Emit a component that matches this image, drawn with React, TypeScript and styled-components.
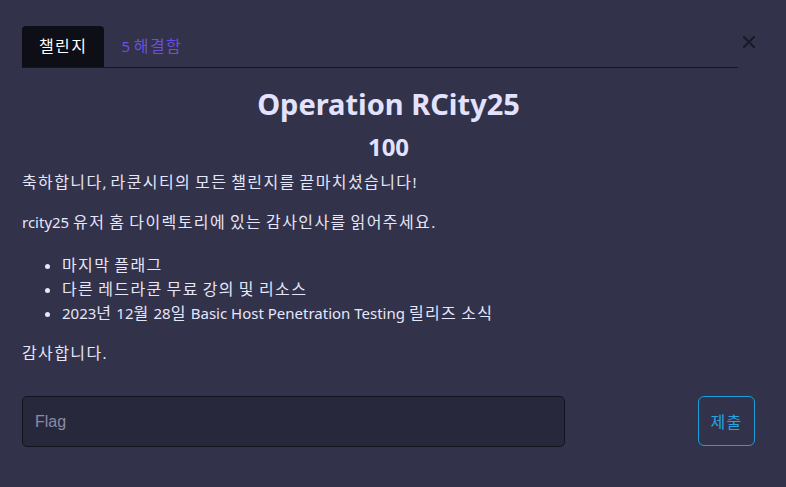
import { Fragment } from "react";
import styled, { createGlobalStyle } from "styled-components";

const GlobalStyle = createGlobalStyle`
  html, body {
    margin: 0;
    padding: 0;
    background: #32324a;
  }
  body {
    font-family: "Noto Sans", "Noto Sans CJK KR", sans-serif;
    color: #e6e6fa;
  }
  * {
    box-sizing: border-box;
  }
`;

// hangul runs are set a touch wider, like the wide korean face of the original
const Hangul = styled.span`
  font-family: "Noto Sans CJK KR", sans-serif;
  font-size: 16px;
  line-height: 1;
  letter-spacing: 1.4px;
`;

function Ko({ text }: { text: string }) {
  const parts = text.split(/([가-힣]+)/);
  return (
    <>
      {parts.map((part, i) =>
        /[가-힣]/.test(part) ? (
          <Hangul key={i}>{part}</Hangul>
        ) : (
          <Fragment key={i}>{part}</Fragment>
        )
      )}
    </>
  );
}

const Modal = styled.div`
  width: 786px;
  height: 487px;
  padding: 26px 31px 0 22px;
  background: #32324a;
`;

const Header = styled.div`
  display: flex;
  align-items: flex-start;
`;

const TabList = styled.div`
  flex: 1;
  display: flex;
  border-bottom: 1px solid #15151f;
`;

const Tab = styled.div<{ $active?: boolean }>`
  height: 41px;
  padding: 0 17px;
  line-height: 41px;
  font-size: 15px;
  white-space: pre;
  border-radius: 4px 4px 0 0;
  background: ${(p) => (p.$active ? "#0e0e17" : "transparent")};
  color: ${(p) => (p.$active ? "#ffffff" : "#6b4fe0")};
`;

const Close = styled.button`
  width: 17px;
  height: 17px;
  margin-top: 7px;
  padding: 0;
  border: none;
  background: transparent;
  display: flex;
  justify-content: flex-end;
  align-items: center;
`;

const Title = styled.h2`
  margin: 18px 0 0;
  text-align: center;
  font-size: 29px;
  line-height: 36px;
  font-weight: 700;
  color: #e2e2ff;
`;

const Points = styled.h3`
  margin: 10px 0 0;
  text-align: center;
  font-size: 24px;
  line-height: 30px;
  font-weight: 700;
  color: #e2e2ff;
`;

const Body = styled.div`
  margin-top: 8px;
  font-size: 15px;
  line-height: 24px;
  p {
    margin: 0 0 16px;
  }
  ul {
    margin: 19px 0 16px;
    padding-left: 40px;
  }
`;

const Form = styled.form`
  display: flex;
  justify-content: space-between;
  align-items: flex-start;
  margin-top: 31px;
`;

const FlagInput = styled.input`
  width: 543px;
  height: 51px;
  padding: 0 12px;
  border: 1px solid #14141e;
  border-radius: 5px;
  background: #28283d;
  color: #e6e6fa;
  font-family: "Liberation Sans", sans-serif;
  font-size: 16px;
  outline: none;
  &::placeholder {
    color: #8c8aa4;
  }
`;

const Submit = styled.button`
  width: 57px;
  height: 50px;
  border: 1px solid #1b9fdb;
  border-radius: 6px;
  background: transparent;
  color: #25a4e4;
  font-family: "Noto Sans CJK KR", sans-serif;
  font-size: 16px;
`;

export default function App() {
  return (
    <>
      <GlobalStyle />
      <Modal>
        <Header>
          <TabList>
            <Tab $active>
              <Ko text="챌린지" />
            </Tab>
            <Tab>
              <Ko text="5 해결함" />
            </Tab>
          </TabList>
          <Close aria-label="닫기">
            <svg width="12" height="12" viewBox="0 0 12 12">
              <path
                d="M1 1 L11 11 M11 1 L1 11"
                stroke="#1a1a28"
                strokeWidth="2.4"
                strokeLinecap="round"
              />
            </svg>
          </Close>
        </Header>
        <Title>Operation RCity25</Title>
        <Points>100</Points>
        <Body>
          <p>
            <Ko text="축하합니다, 라쿤시티의 모든 챌린지를 끝마치셨습니다!" />
          </p>
          <p>
            <Ko text="rcity25 유저 홈 다이렉토리에 있는 감사인사를 읽어주세요." />
          </p>
          <ul>
            <li>
              <Ko text="마지막 플래그" />
            </li>
            <li>
              <Ko text="다른 레드라쿤 무료 강의 및 리소스" />
            </li>
            <li>
              <Ko text="2023년 12월 28일 Basic Host Penetration Testing 릴리즈 소식" />
            </li>
          </ul>
          <p>
            <Ko text="감사합니다." />
          </p>
        </Body>
        <Form onSubmit={(e) => e.preventDefault()}>
          <FlagInput placeholder="Flag" />
          <Submit type="submit">
            <Ko text="제출" />
          </Submit>
        </Form>
      </Modal>
    </>
  );
}
